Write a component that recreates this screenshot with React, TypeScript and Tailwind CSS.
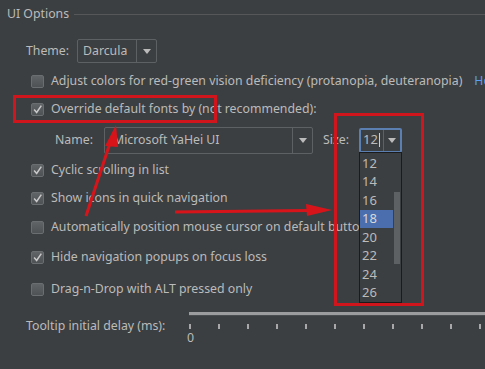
import type {ReactNode} from "react";

const sizes = ["12", "14", "16", "18", "20", "22", "24", "26"];

function Check({checked}: {checked?: boolean}) {
  return (
    <span className="flex h-[13px] w-[13px] shrink-0 items-center justify-center rounded-[2px] border border-[#6b6e70] bg-gradient-to-b from-[#606466] to-[#4e5254]">
      {checked ? (
        <svg viewBox="0 0 13 13" className="h-[13px] w-[13px]">
          <path d="M2.5 6.5 L5.5 10 L11 2" fill="none" stroke="#c9c9c9" strokeWidth="1.8" />
        </svg>
      ) : null}
    </span>
  );
}

function CheckRow({checked, mt, children}: {checked?: boolean; mt: string; children: ReactNode}) {
  return (
    <div className={`flex h-[28px] items-center gap-[7px] whitespace-nowrap pl-[31px] ${mt}`}>
      <Check checked={checked} />
      <span>{children}</span>
    </div>
  );
}

function Arrow() {
  return <span className="h-0 w-0 border-x-[4px] border-t-[5px] border-x-transparent border-t-[#bbbbbb]" />;
}

export default function App() {
  return (
    <div className="relative h-[369px] w-[485px] overflow-hidden bg-[#3c3f41] font-['Noto_Sans',sans-serif] text-[12.3px] text-[#bbbbbb]">
      <div className="flex h-[28px] items-center pl-[7px]">
        <span>UI Options</span>
        <span className="ml-[5px] h-px flex-1 bg-[#555759]" />
      </div>

      <div className="mt-[9px] flex h-[28px] items-center pl-[26px]">
        <span className="w-[51px]">Theme:</span>
        <div className="flex h-[24px] w-[80px] items-center rounded-[2px] border border-[#5e6163]">
          <span className="flex-1 pl-[5px]">Darcula</span>
          <span className="flex h-full w-[20px] items-center justify-center border-l border-[#5e6163]">
            <Arrow />
          </span>
        </div>
      </div>

      <div className="mt-[2px] flex h-[28px] items-center gap-[7px] whitespace-nowrap pl-[31px]">
        <Check />
        <span>Adjust colors for red-green vision deficiency (protanopia, deuteranopia)</span>
        <span className="ml-[5px] text-[#589df6]">How it works</span>
      </div>

      <CheckRow checked mt="mt-0">
        Override default fonts by (not recommended):
      </CheckRow>

      <div className="mt-[3px] flex h-[28px] items-center whitespace-nowrap pl-[55px]">
        <span className="w-[49px]">Name:</span>
        <div className="flex h-[27px] w-[209px] items-center rounded-[2px] border border-[#5e6163]">
          <span className="flex-1 pl-[8px]">Microsoft YaHei UI</span>
          <span className="flex h-full w-[20px] items-center justify-center border-l border-[#5e6163]">
            <Arrow />
          </span>
        </div>
        <span className="ml-[10px] w-[36px]">Size:</span>
        <div className="flex h-[25px] w-[43px] items-center rounded-[2px] border-2 border-[#5a7fb0] text-[13px]">
          <span className="flex flex-1 items-center pl-[2px]">
            12<span className="ml-px h-[14px] w-px bg-[#cfcfcf]" />
          </span>
          <span className="flex h-full w-[17px] items-center justify-center border-l border-[#5e6163]">
            <Arrow />
          </span>
        </div>
      </div>

      <CheckRow checked mt="mt-[2px]">Cyclic scrolling in list</CheckRow>
      <CheckRow checked mt="mt-0">Show icons in quick navigation</CheckRow>
      <CheckRow mt="mt-px">Automatically position mouse cursor on default button</CheckRow>
      <CheckRow checked mt="mt-[2px]">Hide navigation popups on focus loss</CheckRow>
      <CheckRow mt="mt-[4px]">Drag-n-Drop with ALT pressed only</CheckRow>

      <div className="mt-[7px] flex items-start whitespace-nowrap pl-[26px]">
        <span className="flex h-[32px] w-[163px] items-center">Tooltip initial delay (ms):</span>
        <div className="flex flex-1 flex-col pt-[2px]">
          <div className="h-[4px] border-b border-[#4a4d4f] bg-[#9a9c9d]" />
          <div className="mt-[8px] flex gap-[27px]">
            {Array.from({length: 11}).map((_, i) => (
              <span key={i} className="h-[5px] w-[2px] bg-[#a8a8a8]" />
            ))}
          </div>
          <span className="-ml-[2px] mt-[2px] leading-[14px]">0</span>
        </div>
      </div>

      {/* font size dropdown popup */}
      <div className="absolute left-[359px] top-[152px] flex h-[151px] w-[43px] border border-[#1b1b1b] bg-[#3c3f41] text-[13px]">
        <div className="flex flex-1 flex-col pt-[1px]">
          {sizes.map((s) => (
            <div
              key={s}
              className={`flex h-[18.5px] items-center pl-[2px] ${s === "18" ? "bg-[#4b6eaf] text-[#d8d8d8]" : ""}`}>
              {s}
            </div>
          ))}
        </div>
        <div className="w-[8px] pt-[39px]">
          <div className="ml-[1px] h-[72px] w-[6px] bg-[#5d6163]" />
        </div>
      </div>

      {/* red annotations */}
      <div className="absolute left-[13px] top-[95px] h-[28px] w-[204px] border-[3px] border-[#d0161c]" />
      <div className="absolute left-[334px] top-[113px] h-[193px] w-[90px] border-[3px] border-[#d0161c]" />
      <svg className="absolute left-0 top-0" width="485" height="369" viewBox="0 0 485 369">
        <line x1="86" y1="216" x2="111" y2="140" stroke="#d8141b" strokeWidth="3" />
        <polygon points="116,125 105,146 118,147" fill="#d8141b" />
        <line x1="175" y1="212" x2="310" y2="210.5" stroke="#d8141b" strokeWidth="3" />
        <polygon points="332,210 306,204 307,216" fill="#d8141b" />
      </svg>
    </div>
  );
}
